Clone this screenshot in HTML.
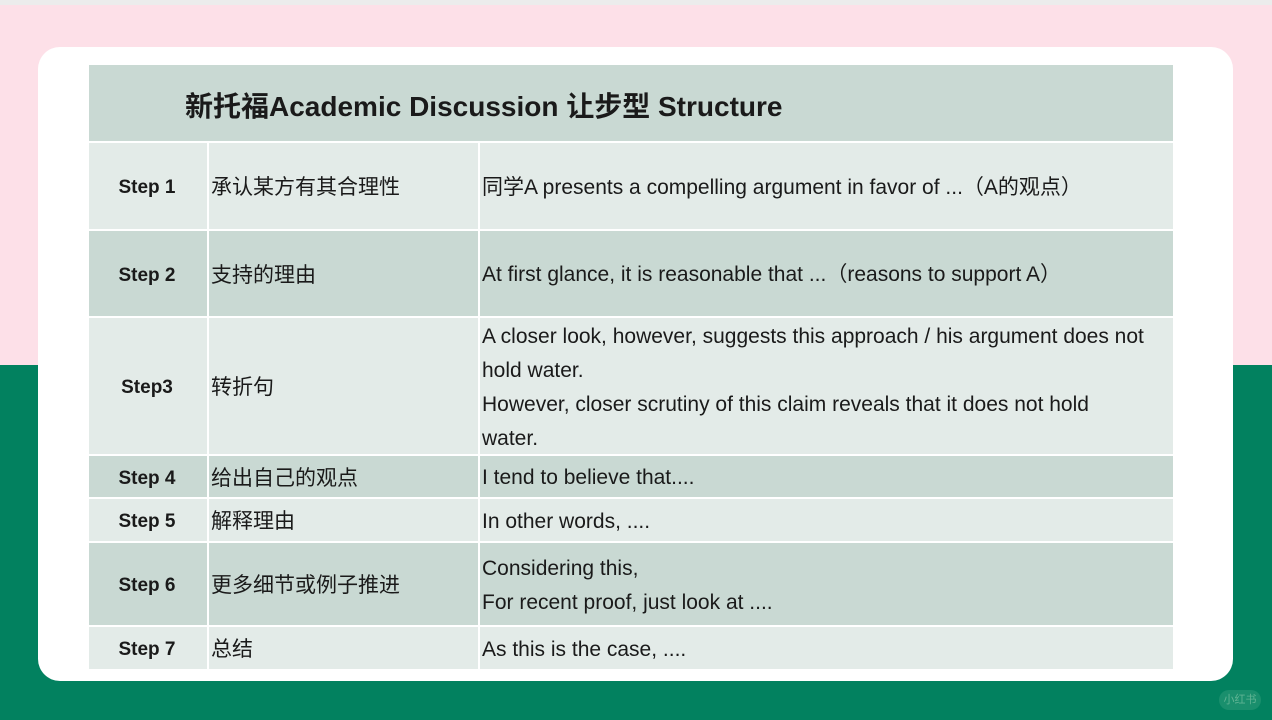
<!DOCTYPE html>
<html><head><meta charset="utf-8"><style>
*{margin:0;padding:0;box-sizing:border-box}
body{width:1272px;height:720px;overflow:hidden;position:relative;background:#02815f;font-family:"Liberation Sans","Noto Sans CJK SC",sans-serif;color:#1a1a1a}
.pink{position:absolute;left:0;top:0;width:1272px;height:365px;background:#fde0e8}
.gray{position:absolute;left:0;top:0;width:1272px;height:5px;background:#ececec}
.card{position:absolute;left:38px;top:47px;width:1195px;height:634px;background:#fff;border-radius:22px}
.r{position:absolute;left:89px;width:1084px}
.d{background:#c9d9d3}.l{background:#e3ebe8}
.c{position:absolute;top:0;height:100%;display:flex;align-items:center;font-size:21px;white-space:nowrap}
.c1{left:0;width:116px;justify-content:center;font-weight:bold;font-size:19px;padding-top:4px}
.c2{left:118px;width:271px;padding-left:2px;border-left:2px solid #fff;font-family:"Noto Sans CJK SC",sans-serif;font-size:21px;padding-bottom:0px}
.c3{left:389px;width:695px;padding-left:2px;border-left:2px solid #fff;line-height:34px;padding-top:3px}
.h{font-size:28px;font-weight:bold;position:absolute;left:96px;top:20px;white-space:nowrap}
.wm{position:absolute;left:1219px;top:690px;width:42px;height:20px;border-radius:10px;background:#1a8f6d;color:#5fb393;font-size:11px;text-align:center;line-height:20px}
</style></head><body>
<div class="pink"></div><div class="gray"></div>
<div class="card"></div>
<div class="r d" style="top:65px;height:76px"><div class="h">新托福Academic Discussion 让步型 Structure</div></div>
<div class="r l" style="top:143px;height:86px"><div class="c c1">Step 1</div><div class="c c2">承认某方有其合理性</div><div class="c c3">同学A presents a compelling argument in favor of ...（A的观点）</div></div>
<div class="r d" style="top:231px;height:85px"><div class="c c1">Step 2</div><div class="c c2">支持的理由</div><div class="c c3">At first glance, it is reasonable that ...（reasons to support A）</div></div>
<div class="r l" style="top:318px;height:136px"><div class="c c1">Step3</div><div class="c c2">转折句</div><div class="c c3"><div>A closer look, however, suggests this approach / his argument does not<br>hold water.<br>However, closer scrutiny of this claim reveals that it does not hold<br>water.</div></div></div>
<div class="r d" style="top:456px;height:41px"><div class="c c1">Step 4</div><div class="c c2">给出自己的观点</div><div class="c c3">I tend to believe that....</div></div>
<div class="r l" style="top:499px;height:42px"><div class="c c1">Step 5</div><div class="c c2">解释理由</div><div class="c c3">In other words, ....</div></div>
<div class="r d" style="top:543px;height:82px"><div class="c c1">Step 6</div><div class="c c2">更多细节或例子推进</div><div class="c c3"><div>Considering this,<br>For recent proof, just look at ....</div></div></div>
<div class="r l" style="top:627px;height:42px"><div class="c c1">Step 7</div><div class="c c2">总结</div><div class="c c3">As this is the case, ....</div></div>
<div class="wm">小红书</div>
</body></html>
